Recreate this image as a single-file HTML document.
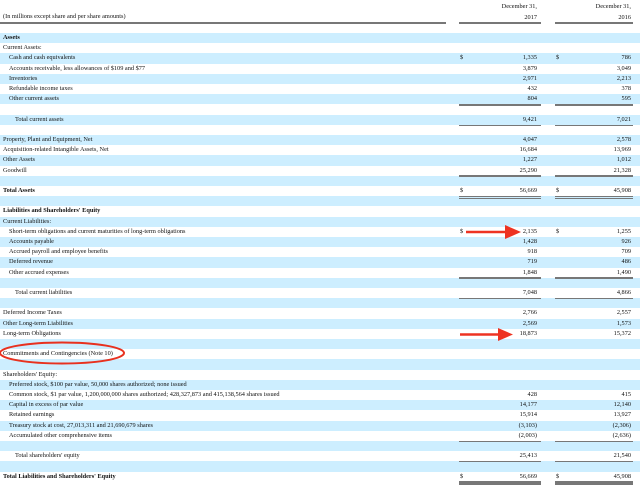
<!DOCTYPE html>
<html><head><meta charset="utf-8"><style>
*{margin:0;padding:0;box-sizing:border-box}
body{width:640px;height:484px;background:#fff;position:relative;overflow:hidden;font-family:"Liberation Serif",serif;font-size:6.3px;color:#111}
.r{position:absolute;left:0;width:640px;height:10.2px;line-height:10.2px;white-space:nowrap}
.b{background:#cdeeff}
.l{position:absolute;left:3px}
.i1{left:9px}.i2{left:15px}
.bo{font-weight:bold}
.d1{position:absolute;left:460px}.d2{position:absolute;left:556px}
.n1{position:absolute;right:103px}.n2{position:absolute;right:9px}
.u{position:absolute;height:1.5px;background:#777}
.h{position:absolute;text-align:right}
</style></head><body>
<div class="h" style="left:480px;width:57px;top:3px">December 31,</div>
<div class="h" style="left:480px;width:57px;top:14px">2017</div>
<div class="h" style="left:570px;width:61px;top:3px">December 31,</div>
<div class="h" style="left:570px;width:61px;top:14px">2016</div>
<div style="position:absolute;left:3px;top:13px">(In millions except share and per share amounts)</div>
<div class="u" style="left:0;width:446px;top:22px"></div>
<div class="u" style="left:459px;width:82px;top:22px"></div>
<div class="u" style="left:555px;width:78px;top:22px"></div>

<div class="r b" style="top:33px"><span class="l bo">Assets</span></div>
<div class="r" style="top:43.2px"><span class="l">Current Assets:</span></div>
<div class="r b" style="top:53.4px"><span class="l i1">Cash and cash equivalents</span><span class="d1">$</span><span class="n1">1,335</span><span class="d2">$</span><span class="n2">786</span></div>
<div class="r" style="top:63.6px"><span class="l i1">Accounts receivable, less allowances of $109 and $77</span><span class="n1">3,879</span><span class="n2">3,049</span></div>
<div class="r b" style="top:73.8px"><span class="l i1">Inventories</span><span class="n1">2,971</span><span class="n2">2,213</span></div>
<div class="r" style="top:84px"><span class="l i1">Refundable income taxes</span><span class="n1">432</span><span class="n2">378</span></div>
<div class="r b" style="top:94.2px"><span class="l i1">Other current assets</span><span class="n1">804</span><span class="n2">595</span></div>
<div class="r" style="top:104.4px"></div>
<div class="r b" style="top:114.6px"><span class="l i2">Total current assets</span><span class="n1">9,421</span><span class="n2">7,021</span></div>
<div class="r" style="top:124.8px"></div>
<div class="r b" style="top:135px"><span class="l">Property, Plant and Equipment, Net</span><span class="n1">4,047</span><span class="n2">2,578</span></div>
<div class="r" style="top:145.2px"><span class="l">Acquisition-related Intangible Assets, Net</span><span class="n1">16,684</span><span class="n2">13,969</span></div>
<div class="r b" style="top:155.4px"><span class="l">Other Assets</span><span class="n1">1,227</span><span class="n2">1,012</span></div>
<div class="r" style="top:165.6px"><span class="l">Goodwill</span><span class="n1">25,290</span><span class="n2">21,328</span></div>
<div class="r b" style="top:175.8px"></div>
<div class="r" style="top:186px"><span class="l bo">Total Assets</span><span class="d1">$</span><span class="n1">56,669</span><span class="d2">$</span><span class="n2">45,908</span></div>
<div class="r b" style="top:196.2px"></div>
<div class="r" style="top:206.4px"><span class="l bo">Liabilities and Shareholders' Equity</span></div>
<div class="r b" style="top:216.6px"><span class="l">Current Liabilities:</span></div>
<div class="r" style="top:226.8px"><span class="l i1">Short-term obligations and current maturities of long-term obligations</span><span class="d1">$</span><span class="n1">2,135</span><span class="d2">$</span><span class="n2">1,255</span></div>
<div class="r b" style="top:237px"><span class="l i1">Accounts payable</span><span class="n1">1,428</span><span class="n2">926</span></div>
<div class="r" style="top:247.2px"><span class="l i1">Accrued payroll and employee benefits</span><span class="n1">918</span><span class="n2">709</span></div>
<div class="r b" style="top:257.4px"><span class="l i1">Deferred revenue</span><span class="n1">719</span><span class="n2">486</span></div>
<div class="r" style="top:267.6px"><span class="l i1">Other accrued expenses</span><span class="n1">1,848</span><span class="n2">1,490</span></div>
<div class="r b" style="top:277.8px"></div>
<div class="r" style="top:288px"><span class="l i2">Total current liabilities</span><span class="n1">7,048</span><span class="n2">4,866</span></div>
<div class="r b" style="top:298.2px"></div>
<div class="r" style="top:308.4px"><span class="l">Deferred Income Taxes</span><span class="n1">2,766</span><span class="n2">2,557</span></div>
<div class="r b" style="top:318.6px"><span class="l">Other Long-term Liabilities</span><span class="n1">2,569</span><span class="n2">1,573</span></div>
<div class="r" style="top:328.8px"><span class="l">Long-term Obligations</span><span class="n1">18,873</span><span class="n2">15,372</span></div>
<div class="r b" style="top:339px"></div>
<div class="r" style="top:349.2px"><span class="l">Commitments and Contingencies (Note 10)</span></div>
<div class="r b" style="top:359.4px"></div>
<div class="r" style="top:369.6px"><span class="l">Shareholders' Equity:</span></div>
<div class="r b" style="top:379.8px"><span class="l i1">Preferred stock, $100 par value, 50,000 shares authorized; none issued</span></div>
<div class="r" style="top:390px"><span class="l i1">Common stock, $1 par value, 1,200,000,000 shares authorized; 428,327,873 and 415,138,564 shares issued</span><span class="n1">428</span><span class="n2">415</span></div>
<div class="r b" style="top:400.2px"><span class="l i1">Capital in excess of par value</span><span class="n1">14,177</span><span class="n2">12,140</span></div>
<div class="r" style="top:410.4px"><span class="l i1">Retained earnings</span><span class="n1">15,914</span><span class="n2">13,927</span></div>
<div class="r b" style="top:420.6px"><span class="l i1">Treasury stock at cost, 27,013,311 and 21,690,679 shares</span><span class="n1">(3,103)</span><span class="n2">(2,306)</span></div>
<div class="r" style="top:430.8px"><span class="l i1">Accumulated other comprehensive items</span><span class="n1">(2,003)</span><span class="n2">(2,636)</span></div>
<div class="r b" style="top:441px"></div>
<div class="r" style="top:451.2px"><span class="l i2">Total shareholders' equity</span><span class="n1">25,413</span><span class="n2">21,540</span></div>
<div class="r b" style="top:461.4px"></div>
<div class="r" style="top:471.6px"><span class="l bo">Total Liabilities and Shareholders' Equity</span><span class="d1">$</span><span class="n1">56,669</span><span class="d2">$</span><span class="n2">45,908</span></div>

<div class="u" style="left:459px;width:82px;top:104px"></div><div class="u" style="left:555px;width:78px;top:104px"></div>
<div class="u" style="left:459px;width:82px;top:124.5px"></div><div class="u" style="left:555px;width:78px;top:124.5px"></div>
<div class="u" style="left:459px;width:82px;top:175.3px"></div><div class="u" style="left:555px;width:78px;top:175.3px"></div>
<div class="u" style="left:459px;width:82px;top:195.5px"></div><div class="u" style="left:555px;width:78px;top:195.5px"></div>
<div class="u" style="left:459px;width:82px;top:197.8px"></div><div class="u" style="left:555px;width:78px;top:197.8px"></div>
<div class="u" style="left:459px;width:82px;top:277.3px"></div><div class="u" style="left:555px;width:78px;top:277.3px"></div>
<div class="u" style="left:459px;width:82px;top:297.7px"></div><div class="u" style="left:555px;width:78px;top:297.7px"></div>
<div class="u" style="left:459px;width:82px;top:440.5px"></div><div class="u" style="left:555px;width:78px;top:440.5px"></div>
<div class="u" style="left:459px;width:82px;top:460.9px"></div><div class="u" style="left:555px;width:78px;top:460.9px"></div>
<div class="u" style="left:459px;width:82px;top:481px"></div><div class="u" style="left:555px;width:78px;top:481px"></div>
<div class="u" style="left:459px;width:82px;top:483px"></div><div class="u" style="left:555px;width:78px;top:483px"></div>

<svg style="position:absolute;left:0;top:0" width="640" height="484">
<ellipse cx="62" cy="353" rx="62" ry="10.5" fill="none" stroke="#e8311f" stroke-width="2"/>
<line x1="466" y1="232" x2="508" y2="232" stroke="#ee3322" stroke-width="2.5"/>
<polygon points="505,225 521,232 505,239" fill="#ee3322"/>
<line x1="460" y1="334.5" x2="500" y2="334.5" stroke="#ee3322" stroke-width="2.5"/>
<polygon points="498,328 513,334.5 498,341" fill="#ee3322"/>
</svg>
</body></html>
